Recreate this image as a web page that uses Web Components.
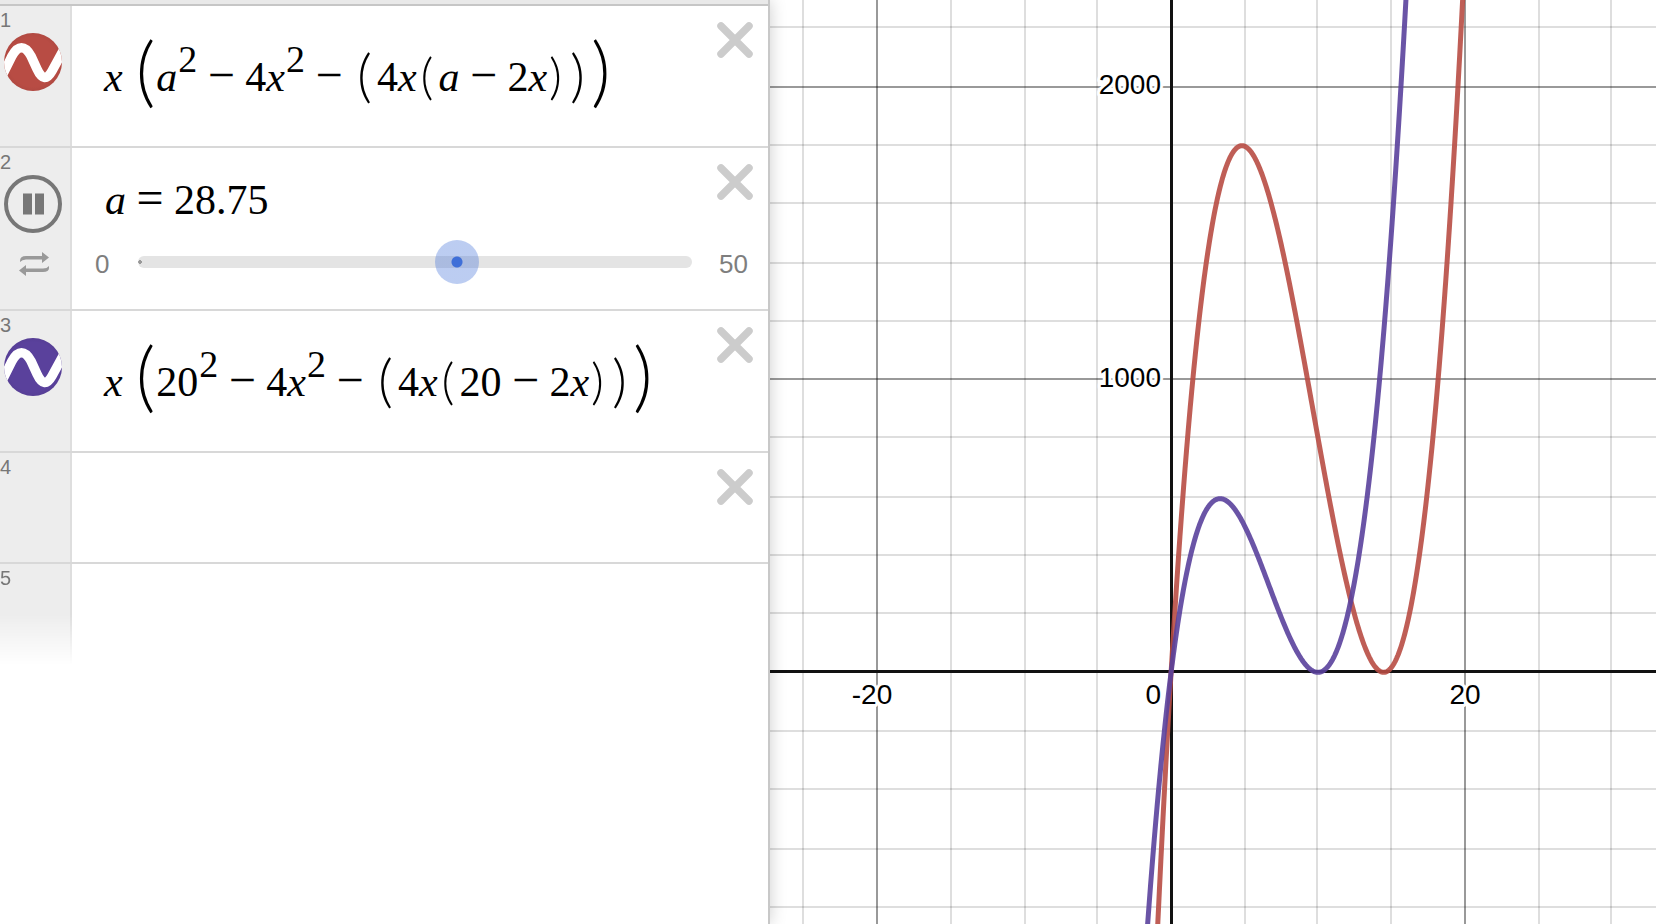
<!DOCTYPE html>
<html lang="en">
<head>
<meta charset="utf-8">
<title>Graphing calculator</title>
<style>
  body {
    margin: 0;
    font-family: "Liberation Sans", Arial, sans-serif;
    background: #fff;
  }
</style>
</head>
<body>

<graph-calculator>
  <expression-list slot="panel">
    <expression-row number="1">
      <curve-icon slot="icon" color="#b84c44"></curve-icon>
      <math-line><i>x</i><math-paren size="large"><i>a</i><sup>2</sup><span>−</span>4<i>x</i><sup>2</sup><span>−</span><math-paren size="medium">4<i>x</i><math-paren><i>a</i><span>−</span>2<i>x</i></math-paren></math-paren></math-paren></math-line>
    </expression-row>
    <expression-row number="2" playing>
      <math-line compact><i>a</i><span>=</span>28.75</math-line>
      <value-slider slot="slider" name="a" min="0" max="50" value="28.75"></value-slider>
    </expression-row>
    <expression-row number="3">
      <curve-icon slot="icon" color="#5a419c"></curve-icon>
      <math-line><i>x</i><math-paren size="large">20<sup>2</sup><span>−</span>4<i>x</i><sup>2</sup><span>−</span><math-paren size="medium">4<i>x</i><math-paren>20<span>−</span>2<i>x</i></math-paren></math-paren></math-paren></math-line>
    </expression-row>
    <expression-row number="4"></expression-row>
    <expression-row number="5" pending></expression-row>
  </expression-list>
  <graph-paper slot="graph" x-min="-27.312" x-max="33.018" y-min="-859" y-max="2294.5"></graph-paper>
</graph-calculator>

<script>
class GraphCalculator extends HTMLElement {
  constructor() {
    super();
    this.attachShadow({ mode: 'open' }).innerHTML = `
      <style>
        :host {
          display: grid;
          grid-template-columns: 385fr 443fr;
          height: 100vh;
          overflow: hidden;
        }
        ::slotted(*) { min-width: 0; }
      </style>
      <slot name="panel"></slot>
      <slot name="graph"></slot>
    `;
  }
}
customElements.define('graph-calculator', GraphCalculator);

class ExpressionList extends HTMLElement {
  constructor() {
    super();
    this.attachShadow({ mode: 'open' }).innerHTML = `
      <style>
        :host {
          display: flex;
          flex-direction: column;
          position: relative;
          z-index: 1;
          background: #fff;
          border-right: 2px solid #c8c8c8;
          box-shadow: 0 0 16px rgba(0, 0, 0, .2);
        }
        header {
          height: 4px;
          flex: none;
          background: #e9e9e9;
          border-bottom: 2px solid #c6c6c6;
        }
      </style>
      <header></header>
      <slot></slot>
    `;
  }
}
customElements.define('expression-list', ExpressionList);

class ExpressionRow extends HTMLElement {
  constructor() {
    super();
    const pending = this.hasAttribute('pending');
    const playing = this.hasAttribute('playing');
    this.attachShadow({ mode: 'open' }).innerHTML = `
      <style>
        :host {
          display: grid;
          grid-template-columns: 72px 1fr;
          flex: none;
          min-height: 109px;
          border-bottom: 2px solid #d8d8d8;
        }
        :host([pending]) {
          min-height: 101px;
          border-bottom: none;
        }
        .gutter {
          display: flex;
          flex-direction: column;
          gap: 3px;
          padding-top: 4px;
          background: #ededed;
          border-right: 2px solid #dedede;
        }
        :host([pending]) .gutter {
          -webkit-mask-image: linear-gradient(#000 50%, transparent);
          mask-image: linear-gradient(#000 50%, transparent);
        }
        .number {
          font-size: 20px;
          line-height: 20px;
          color: #777;
        }
        .line {
          display: flex;
          align-items: flex-start;
        }
        .field { flex: 1; }
        button {
          display: block;
          padding: 0;
          border: none;
          background: none;
          cursor: pointer;
        }
        .play { margin-left: 4px; align-self: flex-start; }
        .loop { margin: 15px 0 0 18px; align-self: flex-start; }
        .delete { margin: 16px 15px 0 0; }
        svg { display: block; }
      </style>
      <div class="gutter">
        <span class="number">${this.getAttribute('number')}</span>
        <slot name="icon"></slot>
        ${playing ? `
        <button class="play" aria-label="Pause">
          <svg width="58" height="58" viewBox="0 0 58 58">
            <circle cx="29" cy="29" r="27" fill="none" stroke="#777" stroke-width="4"/>
            <path d="M19 18.500h9v21h-9zM31 18.500h9v21h-9z" fill="#777"/>
          </svg>
        </button>
        <button class="loop" aria-label="Animation mode">
          <svg width="32" height="26" viewBox="0 0 32 26" fill="#999">
            <path d="M2 11V10Q2 5 8 5H24V1L31 6.500L24 12V8.500H8Q4 8.500 2 11Z"/>
            <path d="M31 15V17Q31 21 25 21H8V25L1 19.500L8 14V17.500H25Q29 17.500 31 15Z"/>
          </svg>
        </button>` : ''}
      </div>
      <div class="body">
        <div class="line">
          <div class="field"><slot></slot></div>
          ${pending ? '' : `
          <button class="delete" aria-label="Delete expression">
            <svg width="36" height="36" viewBox="0 0 36 36">
              <path d="M4 4L32 32M32 4L4 32" stroke="#ccc" stroke-width="7.500" stroke-linecap="round"/>
            </svg>
          </button>`}
        </div>
        <slot name="slider"></slot>
      </div>
    `;
  }
}
customElements.define('expression-row', ExpressionRow);

class CurveIcon extends HTMLElement {
  constructor() {
    super();
    this.attachShadow({ mode: 'open' }).innerHTML = `
      <style>
        :host { display: block; margin-left: 4px; }
        button {
          display: block;
          padding: 0;
          border: none;
          border-radius: 50%;
          overflow: hidden;
          width: 58px;
          height: 58px;
          background: radial-gradient(circle, transparent 60%, rgba(0, 0, 0, .15)) ${this.getAttribute('color')};
        }
        svg { display: block; }
      </style>
      <button aria-label="Toggle curve">
        <svg width="58" height="58" viewBox="0 0 58 58">
          <path d="M-1 41L8 23C14 12 21 12 27 23L33 36C38 47 43 47 48 38L60 16"
                fill="none" stroke="#fff" stroke-width="9.500"/>
        </svg>
      </button>
    `;
  }
}
customElements.define('curve-icon', CurveIcon);

// superscripts and binary operators, shared by the line and its brackets
const mathStyles = `
  ::slotted(sup) {
    margin-left: 1px;
    font-size: 38px;
    line-height: 0;
    vertical-align: 19px;
  }
  ::slotted(span) {
    display: inline-block;
    width: 28px;
    margin: 0 10px;
    font-size: 48px;
    line-height: 0;
    text-align: center;
  }
`;

class MathLine extends HTMLElement {
  constructor() {
    super();
    this.attachShadow({ mode: 'open' }).innerHTML = `
      <style>
        :host {
          display: block;
          padding: 31px 0 29px 32px;
          font: 42px/80px "Liberation Serif", "Times New Roman", serif;
          white-space: nowrap;
          color: #000;
        }
        :host([compact]) { padding: 12px 0 0 33px; }
        ${mathStyles}
      </style>
      <slot></slot>
    `;
  }
}
customElements.define('math-line', MathLine);

class MathParen extends HTMLElement {
  constructor() {
    super();
    // no white space outside the style element: it would show in the line
    this.attachShadow({ mode: 'open' }).innerHTML = `<style>
        ${mathStyles}
        .paren {
          font-family: Lato, "Liberation Sans", sans-serif;
          font-size: 50px;
          font-weight: 300;
          line-height: 0;
          vertical-align: -3px;
        }
        .open { margin: 0 5px 0 4px; }
        .close { margin: 0 6px 0 2px; }
        :host([size="medium"]) > .paren, .medium {
          font-size: 58px;
          vertical-align: -5px;
        }
        .large {
          font-size: 76px;
          vertical-align: -7px;
        }
        .open.large { margin: 0 1px 0 13px; }
        .close.large { margin: 0; }
      </style><span class="paren open">(</span><slot></slot><span class="paren close">)</span>`;
    const size = this.getAttribute('size');
    if (size) this.shadowRoot.querySelectorAll('.paren').forEach(el => el.classList.add(size));
  }
}
customElements.define('math-paren', MathParen);

class ValueSlider extends HTMLElement {
  constructor() {
    super();
    const [name, min, max, value] = ['name', 'min', 'max', 'value'].map(a => this.getAttribute(a));
    this.attachShadow({ mode: 'open' }).innerHTML = `
      <style>
        :host {
          display: flex;
          align-items: center;
          gap: 5px;
          padding: 0 20px 25px 23px;
          font-size: 26px;
          line-height: 40px;
          color: #7e7e7e;
        }
        .limit { padding-top: 4px; }
        .track {
          flex: 1;
          display: grid;
          position: relative;
          margin-left: 2px;
        }
        .track::before {
          content: "";
          position: absolute;
          inset: 16px 22px;
          border-radius: 6px;
          background: radial-gradient(circle at 2px 6px, #999 2px, transparent 2px) #e4e4e4;
        }
        input {
          -webkit-appearance: none;
          appearance: none;
          position: relative;
          width: 100%;
          height: 44px;
          margin: 0;
          background: none;
        }
        input::-webkit-slider-thumb {
          -webkit-appearance: none;
          width: 44px;
          height: 44px;
          border-radius: 50%;
          background: radial-gradient(circle, #3f6fd8 5px, rgba(63, 111, 216, .35) 6px);
        }
      </style>
      <span class="limit">${min}</span>
      <div class="track">
        <input type="range" aria-label="${name}" min="${min}" max="${max}" step="0.01" value="${value}">
      </div>
      <span class="limit">${max}</span>
    `;
  }
}
customElements.define('value-slider', ValueSlider);

class GraphPaper extends HTMLElement {
  constructor() {
    super();
    this.attachShadow({ mode: 'open' }).innerHTML = `
      <style>
        :host { display: block; overflow: hidden; background: #fff; }
        svg { display: block; width: 100%; height: 100%; }
        .minor { stroke: rgba(0, 0, 0, .13); stroke-width: 2; }
        .major { stroke: rgba(0, 0, 0, .4); stroke-width: 2; }
        .axis { stroke: #111; stroke-width: 3; }
        .curve { fill: none; stroke-width: 5; stroke-linejoin: round; opacity: .9; }
        text {
          font-size: 28px;
          fill: #000;
          stroke: #fff;
          stroke-width: 6px;
          stroke-linejoin: round;
          paint-order: stroke;
        }
        .end { text-anchor: end; }
        .middle { text-anchor: middle; }
      </style>
      <svg role="img" aria-label="Graph"></svg>
    `;
    this.svg = this.shadowRoot.querySelector('svg');
  }

  connectedCallback() {
    this.draw();
    new ResizeObserver(() => this.draw()).observe(this);
  }

  draw() {
    const { clientWidth: w, clientHeight: h } = this;
    if (!w || !h) return;
    const [x0, x1, y0, y1] = ['x-min', 'x-max', 'y-min', 'y-max'].map(a => Number(this.getAttribute(a)));
    const px = x => (x - x0) / (x1 - x0) * w;
    const py = y => (y1 - y) / (y1 - y0) * h;
    // grid lines are 2px wide and sit on an even pixel grid
    const snap = v => Math.floor(v / 2) * 2 + 1;
    const ox = snap(px(0));
    const oy = snap(py(0)) - 2;

    let out = '';
    for (let x = Math.ceil(x0 / 5) * 5; x <= x1; x += 5) {
      if (x) out += `<path class="${x % 20 ? 'minor' : 'major'}" d="M${snap(px(x))} 0V${h}"/>`;
    }
    for (let y = Math.ceil(y0 / 200) * 200; y <= y1; y += 200) {
      if (y) out += `<path class="${y % 1000 ? 'minor' : 'major'}" d="M0 ${snap(py(y))}H${w}"/>`;
    }
    out += `<path class="axis" d="M0 ${oy + .5}H${w}M${ox + .5} 0V${h}"/>`;

    // volume of an open box folded from a sheet with side a
    const volume = a => x => x * (a * a - 4 * x * x - 4 * x * (a - 2 * x));
    const plot = (f, color) => {
      const points = [];
      for (let x = -4; x <= 24; x += .05) {
        points.push(`${px(x).toFixed(2)} ${py(f(x)).toFixed(2)}`);
      }
      return `<path class="curve" stroke="${color}" d="M${points.join('L')}"/>`;
    };
    const label = (x, y, text, cls) => `<text class="${cls}" x="${x}" y="${y}">${text}</text>`;
    out += label(snap(px(-20)) - 5, oy + 33, '-20', 'middle');
    out += label(ox - 10, oy + 33, '0', 'end');
    out += label(snap(px(20)), oy + 33, '20', 'middle');
    out += label(ox - 10, snap(py(1000)) + 8, '1000', 'end');
    out += label(ox - 10, snap(py(2000)) + 7, '2000', 'end');
    // the running animation is a little ahead of the value in the list
    out += plot(volume(28.95), '#b84c44');
    out += plot(volume(20), '#5a419c');
    this.svg.innerHTML = out;
  }
}
customElements.define('graph-paper', GraphPaper);
</script>

</body>
</html>
